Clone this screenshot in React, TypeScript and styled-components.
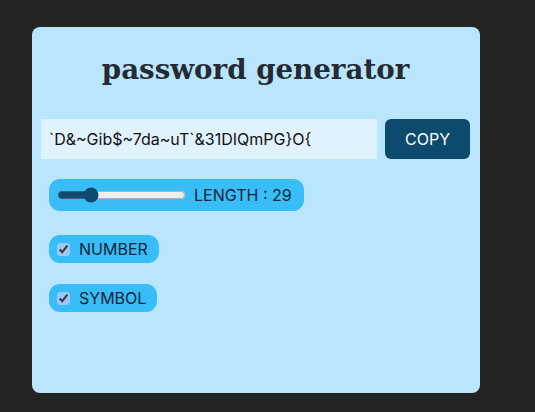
import React, { useState } from "react";
import styled, { createGlobalStyle } from "styled-components";

const Global = createGlobalStyle`
  html, body { margin: 0; padding: 0; }
  body {
    background: #242424;
    color-scheme: dark;
    font-family: Inter, "Noto Sans", sans-serif;
    min-height: 412px;
  }
`;

const Page = styled.div`
  padding: 27px 0 0 32px;
`;

const Card = styled.div`
  width: 448px;
  height: 366px;
  box-sizing: border-box;
  background: #bae6fd;
  border-radius: 8px;
  padding: 0 10px 0 9px;
  display: flex;
  flex-direction: column;
`;

const Title = styled.h1`
  margin: 26px 0 0;
  font-family: "DejaVu Serif", "Liberation Serif", serif;
  font-weight: 700;
  font-size: 27.7px;
  line-height: 34px;
  color: #262a33;
  text-align: center;
`;

const InputRow = styled.div`
  display: flex;
  gap: 8px;
  margin-top: 32px;
  height: 40px;
`;

const PasswordField = styled.input`
  flex: 1;
  min-width: 0;
  border: none;
  outline: none;
  background: #e0f2fe;
  color: #111;
  font-family: Inter, sans-serif;
  font-size: 16px;
  padding: 0 0 0 8px;
  color-scheme: light;
`;

const CopyButton = styled.button`
  width: 85px;
  border: none;
  border-radius: 6px;
  background: #0c4a6e;
  color: #fff;
  font-family: Inter, sans-serif;
  font-size: 16px;
  cursor: pointer;
`;

const Controls = styled.div`
  display: flex;
  flex-direction: column;
  align-items: flex-start;
  padding-left: 8px;
  margin-top: 20px;
`;

const Pill = styled.label<{ $height: number; $mt: number; $pr: number }>`
  display: flex;
  align-items: center;
  gap: 6px;
  height: ${(p) => p.$height}px;
  margin-top: ${(p) => p.$mt}px;
  box-sizing: border-box;
  padding: 0 ${(p) => p.$pr}px 0 6px;
  background: #38bdf8;
  border-radius: 11px;
  color: #0f2437;
  font-size: 16px;
`;

const Range = styled.input`
  accent-color: #0c4a6e;
  color-scheme: light;
  margin: 2px;
`;

const Check = styled.input`
  margin: 3px 3px 3px 2px;
`;

export default function App() {
  const [length, setLength] = useState(29);
  const [num, setNum] = useState(true);
  const [sym, setSym] = useState(true);
  return (
    <>
      <Global />
      <Page>
        <Card>
          <Title>password generator</Title>
          <InputRow>
            <PasswordField readOnly value="`D&~Gib$~7da~uT`&31DIQmPG}O{" />
            <CopyButton>COPY</CopyButton>
          </InputRow>
          <Controls>
            <Pill $height={32} $mt={0} $pr={12}>
              <Range
                type="range"
                min={8}
                max={100}
                value={length}
                onChange={(e) => setLength(Number(e.target.value))}
              />
              LENGTH : {length}
            </Pill>
            <Pill $height={28} $mt={24} $pr={11}>
              <Check type="checkbox" checked={num} onChange={() => setNum(!num)} />
              NUMBER
            </Pill>
            <Pill $height={28} $mt={21} $pr={11}>
              <Check type="checkbox" checked={sym} onChange={() => setSym(!sym)} />
              SYMBOL
            </Pill>
          </Controls>
        </Card>
      </Page>
    </>
  );
}
